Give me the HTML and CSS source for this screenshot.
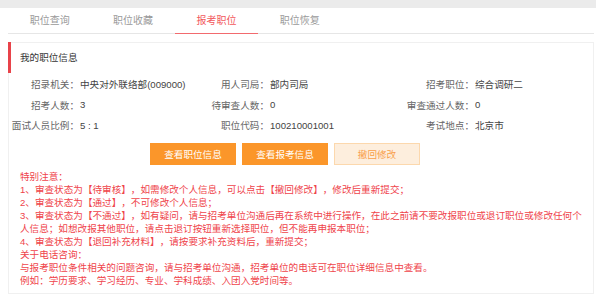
FILE: index.html
```html
<!DOCTYPE html>
<html lang="zh-CN">
<head>
  <meta charset="UTF-8" />
  <title>报考职位</title>
  <link rel="stylesheet" href="styles.css">
</head>
<body>
<div class="topbar"></div>
<ul class="tabs">
  <li class="tab">职位查询</li>
  <li class="tab">职位收藏</li>
  <li class="tab active">报考职位</li>
  <li class="tab">职位恢复</li>
</ul>
<section class="panel">
  <h2 class="panel-title">我的职位信息</h2>
  <div class="info">
    <span class="label">招录机关：</span><span class="value">中央对外联络部(009000)</span>
    <span class="label">用人司局：</span><span class="value">部内司局</span>
    <span class="label">招考职位：</span><span class="value">综合调研二</span>
    <span class="label">招考人数：</span><span class="value">3</span>
    <span class="label">待审查人数：</span><span class="value">0</span>
    <span class="label">审查通过人数：</span><span class="value">0</span>
    <span class="label">面试人员比例：</span><span class="value">5 : 1</span>
    <span class="label">职位代码：</span><span class="value">100210001001</span>
    <span class="label">考试地点：</span><span class="value">北京市</span>
  </div>
  <div class="actions">
    <button class="btn">查看职位信息</button>
    <button class="btn">查看报考信息</button>
    <button class="btn btn-light">撤回修改</button>
  </div>
  <div class="notes">
    <p>特别注意：</p>
    <p>1、审查状态为【待审核】，如需修改个人信息，可以点击【撤回修改】，修改后重新提交；</p>
    <p>2、审查状态为【通过】，不可修改个人信息；</p>
    <p>3、审查状态为【不通过】，如有疑问，请与招考单位沟通后再在系统中进行操作，在此之前请不要改报职位或退订职位或修改任何个人信息；如想改报其他职位，请点击退订按钮重新选择职位，但不能再申报本职位；</p>
    <p>4、审查状态为【退回补充材料】，请按要求补充资料后，重新提交；</p>
    <p>关于电话咨询：</p>
    <p>与报考职位条件相关的问题咨询，请与招考单位沟通，招考单位的电话可在职位详细信息中查看。</p>
    <p>例如：学历要求、学习经历、专业、学科成绩、入团入党时间等。</p>
  </div>
</section>
</body>
</html>
```

FILE: styles.css
```css
body {
  margin: 0;
  background-color: #fff;
  font-family: "Liberation Sans", "Noto Sans CJK SC", sans-serif;
  font-size: 9.6px;
  color: #333;
  text-spacing-trim: space-all;
}
.topbar {
  height: 8px;
  background-color: #ebebeb;
}
.tabs {
  list-style: none;
  margin: 0 2px 0 8px;
  padding: 0;
  display: flex;
  border-bottom: 1px solid #e6e6e6;
}
.tab {
  width: 83.4px;
  height: 25px;
  line-height: 25px;
  text-align: center;
  font-size: 10px;
  color: #9a9a9a;
}
.tab.active {
  color: #f2585c;
  border-bottom: 1px solid #f26a6e;
  margin-bottom: -1px;
}
.panel {
  margin: 8px 2px 0 8px;
  border: 1px solid #f0f0f0;
  padding-bottom: 6px;
}
.panel-title {
  margin: -1px 0 0 -1px;
  height: 31px;
  line-height: 31px;
  border-left: 3px solid #e8434a;
  padding-left: 9px;
  font-size: 9.6px;
  font-weight: normal;
  color: #333;
}
.info {
  display: grid;
  grid-template-columns: 70px 120px 70px 135px 70px auto;
  grid-auto-rows: 20.5px;
  align-items: center;
  margin-top: 1px;
}
.label {
  text-align: right;
  color: #666;
  white-space: nowrap;
}
.value {
  padding-left: 1px;
  color: #444;
  white-space: nowrap;
}
.actions {
  display: flex;
  gap: 6px;
  padding-left: 141px;
  margin-top: 7px;
}
.btn {
  width: 86px;
  height: 22px;
  border: 1px solid #fb962a;
  background-color: #fb962a;
  color: #fff;
  font-family: inherit;
  font-size: 9.6px;
  padding: 0;
}
.btn-light {
  background-color: #fdeedd;
  border-color: #fcd8ad;
  color: #f9a04a;
}
.notes {
  margin-top: 5px;
  padding: 0 8px 0 11px;
  color: #ef444b;
  line-height: 13px;
}
.notes p {
  margin: 0;
}
```
